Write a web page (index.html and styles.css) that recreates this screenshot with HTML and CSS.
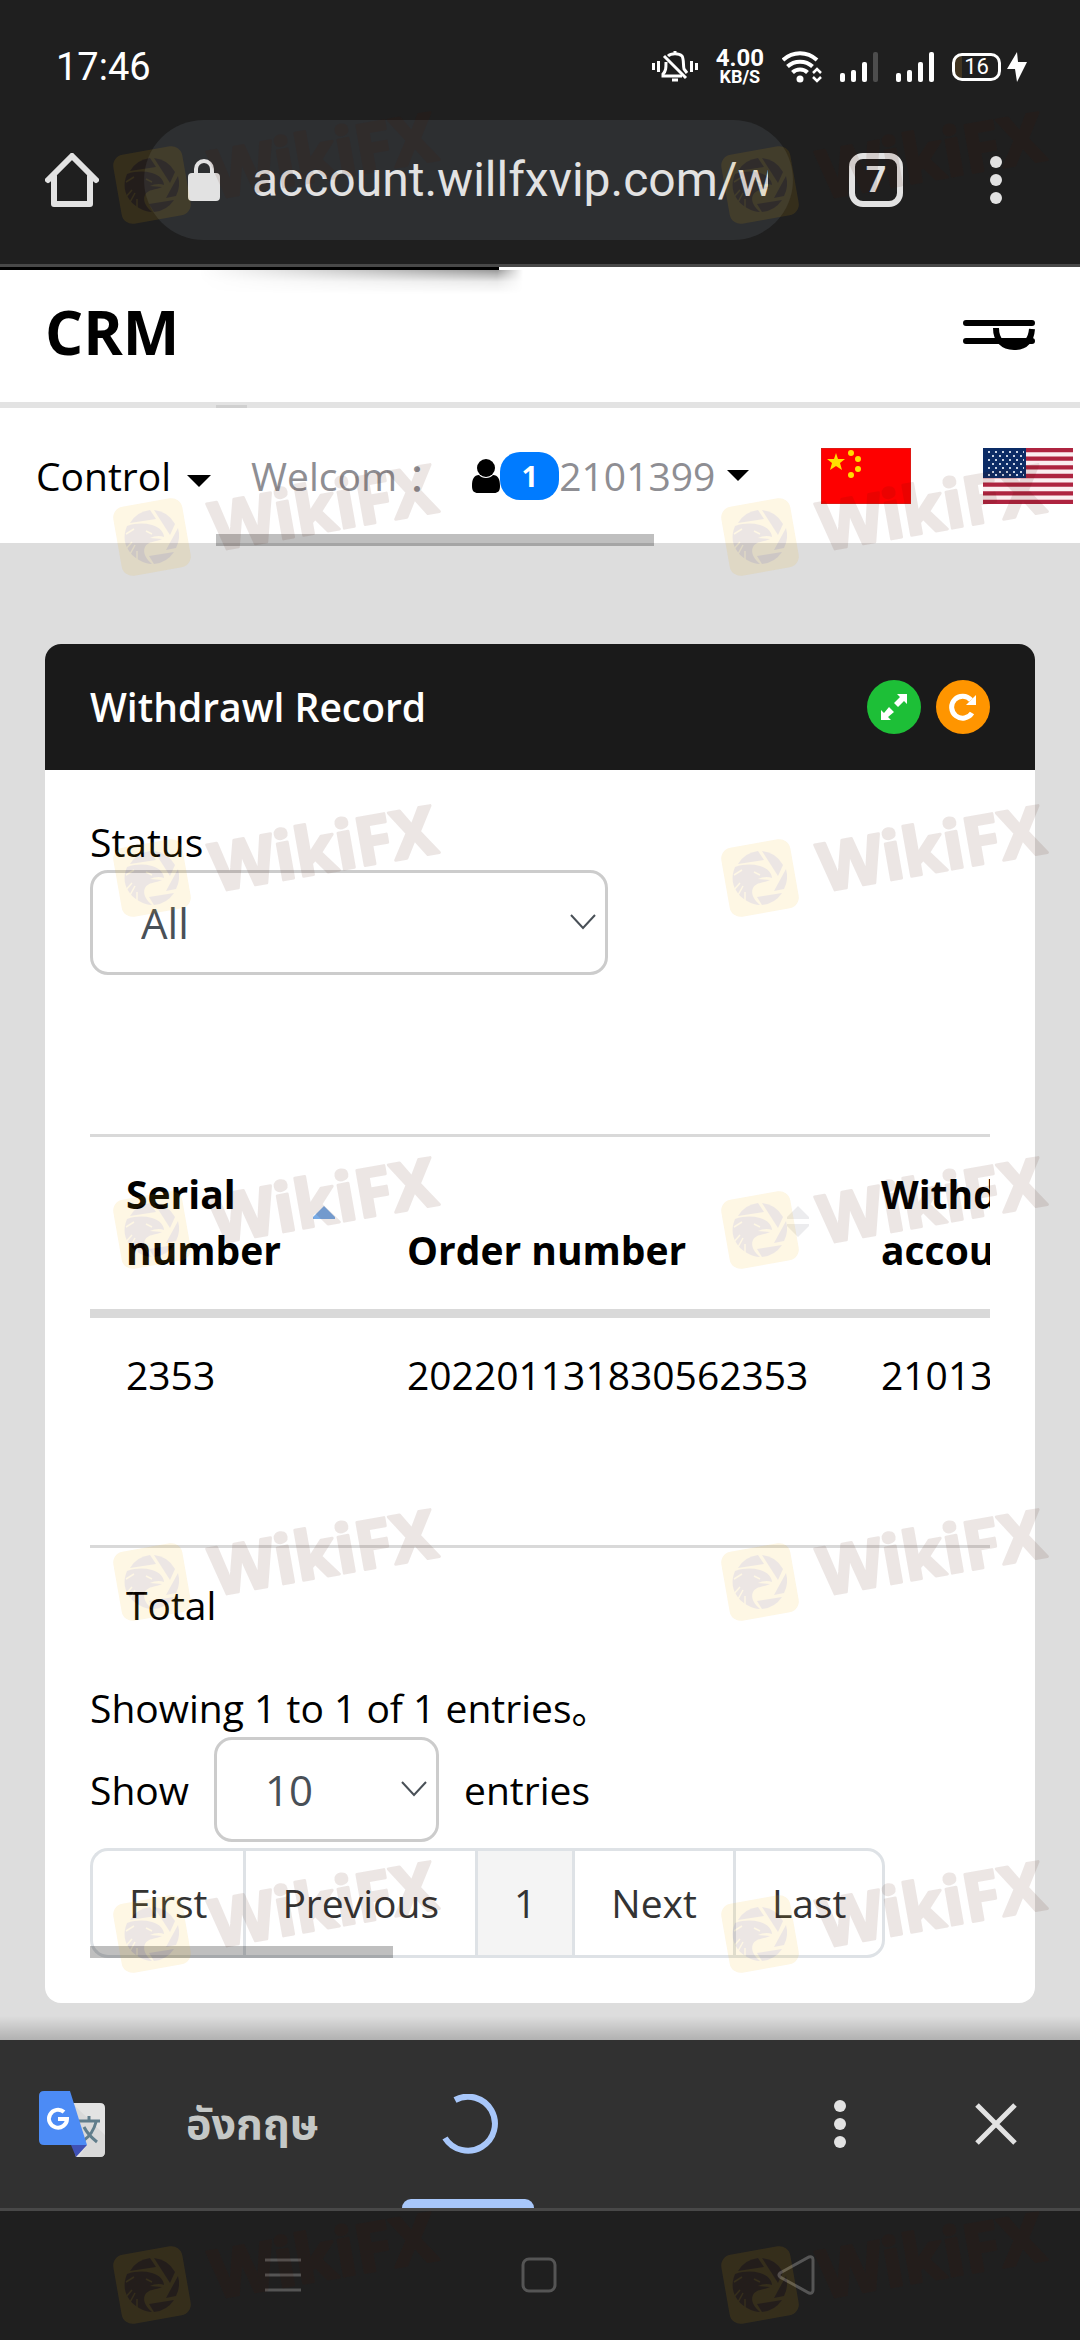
FILE: index.html
```html
<!DOCTYPE html>
<html lang="en">
<head>
<meta charset="utf-8">
<meta name="viewport" content="width=device-width, initial-scale=1">
<title>Withdrawl Record</title>
<link rel="stylesheet" href="styles.css">
</head>
<body>
<header class="browser">
  <div class="statusbar">
    <span class="clock">17:46</span>
    <div class="indicators">
      <svg width="46" height="32" viewBox="0 0 46 32" fill="none" stroke="#fff" stroke-width="3">
        <path d="M1.500 12v7M6.500 10v11M39.500 10v11M44.500 12v7M12 5l22 22" />
        <path d="M16 5c3-3 11-3 14 0 2 3 1 9 2 13l3 4M14 11c0 6 0 9-3 12v2h19M20 29h6M23 0v4" />
      </svg>
      <div class="netspeed"><span class="netspeed-value">4.00</span><span class="netspeed-unit">KB/S</span></div>
      <svg width="40" height="32" viewBox="0 0 40 32" fill="none" stroke="#fff" stroke-width="4">
        <path d="M1 9c10-9 24-9 34 0M5.500 15.500c7-6.500 18-6.500 25 0M10.500 21.500c4-4 11-4 15 0" />
        <circle cx="18" cy="28" r="3.500" fill="#fff" stroke="none" />
        <path d="M31 22l4-4 4 4M31 26l4 4 4-4" stroke-width="2.500" />
      </svg>
      <svg width="38" height="32" viewBox="0 0 38 32" fill="#fff">
        <rect y="22" width="5" height="9" rx="2" /><rect x="11" y="19" width="5" height="12" rx="2" /><rect x="22" y="11" width="5" height="20" rx="2" /><rect x="33" y="1" width="5" height="30" rx="2" fill="#4d4d4d" />
      </svg>
      <svg width="38" height="32" viewBox="0 0 38 32" fill="#fff">
        <rect y="22" width="5" height="9" rx="2" /><rect x="11" y="19" width="5" height="12" rx="2" /><rect x="22" y="11" width="5" height="20" rx="2" /><rect x="33" y="1" width="5" height="30" rx="2" />
      </svg>
      <div class="battery">
        <span class="battery-level">16</span>
        <svg width="20" height="32" viewBox="0 0 20 32" fill="#fff"><path d="M10 1L0 18h8l2 13L20 11h-9z" /></svg>
      </div>
    </div>
  </div>
  <div class="toolbar">
    <button class="icon-button" aria-label="Home">
      <svg width="54" height="54" viewBox="0 0 54 54" fill="none" stroke="#e2e2e2" stroke-width="6" stroke-linejoin="round" stroke-linecap="round"><path d="M3 27L27 3l24 24M9 23v28h36V23" /></svg>
    </button>
    <div class="address">
      <svg class="lock" width="32" height="42" viewBox="0 0 32 42"><rect y="14" width="32" height="28" rx="4" fill="#e2e2e2" /><path d="M8 15V10a8 8 0 0 1 16 0v5" fill="none" stroke="#e2e2e2" stroke-width="4" /></svg>
      <input class="address-input" type="text" aria-label="Address" value="account.willfxvip.com/w">
    </div>
    <button class="tabs" aria-label="Open tabs">7</button>
    <button class="icon-button menu" aria-label="Browser menu">
      <svg width="12" height="48" viewBox="0 0 12 48" fill="#e2e2e2"><circle cx="6" cy="6" r="6" /><circle cx="6" cy="24" r="6" /><circle cx="6" cy="42" r="6" /></svg>
    </button>
  </div>
  <div class="load-progress"></div>
</header>

<main class="page">
  <div class="brandbar">
    <a class="brand" href="#">CRM</a>
    <button class="icon-button toggle" aria-label="Toggle menu">
      <svg width="72" height="36" viewBox="0 0 72 36" fill="none" stroke="#000" stroke-width="6"><path d="M3 6h66M3 24h66" stroke-linecap="round" /><path d="M33 11c0 12 7 19 18 19s17-6 18-18" /><path d="M39 25h24l-5 5H45z" fill="#000" stroke="none" /></svg>
    </button>
    <span class="brandbar-scroll"></span>
  </div>
  <nav class="usernav">
    <a class="nav-link" href="#">Control
      <svg width="24" height="12" viewBox="0 0 24 12"><path d="M0 0h24L12 12z" /></svg>
    </a>
    <span class="welcome">Welcom ：</span>
    <a class="account" href="#">
      <svg width="28" height="34" viewBox="0 0 28 34"><circle cx="14" cy="9" r="9" /><path d="M7 16c3 4 11 4 14 0 5 0 7 4 7 11 0 5-2 7-6 7H6c-4 0-6-2-6-7 0-7 2-11 7-11z" /></svg>
      <span class="badge">1</span>
      <span class="account-id">2101399</span>
      <svg class="account-caret" width="22" height="11" viewBox="0 0 24 12"><path d="M0 0h24L12 12z" /></svg>
    </a>
    <a class="flag" href="#" aria-label="Chinese">
      <svg width="90" height="56" viewBox="0 0 90 56"><path fill="#fe0000" stroke="#c03028" d="M0 0h90v56H0z" /><g fill="#ffde00"><path d="M15 5l2 6h7l-5 4 2 7-6-4-6 4 2-7-5-4h7z" /><circle cx="30" cy="5" r="3" /><circle cx="37" cy="11" r="3" /><circle cx="37" cy="21" r="3" /><circle cx="30" cy="27" r="3" /></g></svg>
    </a>
    <a class="flag" href="#" aria-label="English">
      <svg width="90" height="56" viewBox="0 0 90 56"><path fill="#fbeef0" d="M0 0h90v56H0z" /><path stroke="#ae2440" stroke-width="4.300" d="M0 2h90M0 10.700h90M0 19.300h90M0 28h90M0 36.600h90M0 45.300h90M0 54h90" /><path fill="#0c2c66" d="M0 0h43v30H0z" /><path stroke="#c9d3e4" stroke-width="2" stroke-dasharray="2 5" d="M5 4h36M5 12h36M5 20h36M5 27h36M9 8h32M9 16h32M9 24h32" /></svg>
    </a>
    <span class="usernav-scroll"></span>
  </nav>

  <section class="card">
    <div class="card-header">
      <h1 class="card-title">Withdrawl Record</h1>
      <div class="card-tools">
        <button class="round green" aria-label="Expand"><svg width="28" height="28" viewBox="0 0 28 28" fill="#fff"><path d="M27 1v10l-3-3-6 6-4-4 6-6-3-3zM1 27V17l3 3 5-6 5 5-6 5 3 3z" /></svg></button>
        <button class="round orange" aria-label="Refresh"><svg width="28" height="28" viewBox="0 0 28 28"><path d="M23 20a11 11 0 1 1-1-13" fill="none" stroke="#fff" stroke-width="5" /><path d="M27 2v10H17z" fill="#fff" /></svg></button>
      </div>
    </div>
    <div class="card-body">
      <label class="status-label" for="status">Status</label>
      <div class="select-box status-box">
        <select class="select" id="status"><option>All</option></select>
        <svg class="chevron" width="26" height="16" viewBox="0 0 26 16"><path d="M1 1l12 13L25 1" /></svg>
      </div>

      <div class="table-wrap">
        <table class="records">
          <colgroup><col class="col-serial"><col class="col-order"><col class="col-account"></colgroup>
          <thead>
            <tr>
              <th>Serial number<svg class="sort" width="24" height="33" viewBox="0 0 24 33"><path d="M1 12L12 1l11 11v2H1z" fill="#78abe6" /></svg></th>
              <th>Order number<svg class="sort" width="24" height="33" viewBox="0 0 24 33" fill="#ececee"><path d="M1 12L12 1l11 11v2H1zM1 19h22v2L12 32 1 21z" /></svg></th>
              <th>Withdrawal account</th>
            </tr>
          </thead>
          <tbody>
            <tr><td>2353</td><td>202201131830562353</td><td>2101399</td></tr>
          </tbody>
          <tfoot>
            <tr><td>Total</td><td></td><td></td></tr>
          </tfoot>
        </table>
      </div>

      <p class="summary">Showing 1 to 1 of 1 entries。</p>
      <div class="page-size">
        <label for="size">Show</label>
        <div class="select-box size-box">
          <select class="select" id="size"><option>10</option></select>
          <svg class="chevron" width="26" height="16" viewBox="0 0 26 16"><path d="M1 1l12 13L25 1" /></svg>
        </div>
        <span>entries</span>
      </div>
      <div class="pager">
        <a class="pager-link" href="#">First</a>
        <a class="pager-link" href="#">Previous</a>
        <a class="pager-link current" href="#">1</a>
        <a class="pager-link" href="#">Next</a>
        <a class="pager-link" href="#">Last</a>
        <span class="pager-scroll"></span>
      </div>
    </div>
  </section>
</main>

<footer class="bottom">
  <div class="translate">
    <svg width="66" height="66" viewBox="0 0 66 66">
      <path d="M24 12h37q5 0 5 5v44q0 5-5 5H37z" fill="#e3e3e3" />
      <path d="M35 14l31 30v17q0 5-5 5H40l8-12z" fill="#d2d2d2" opacity=".6" />
      <g fill="none" stroke="#607d8b" stroke-width="3"><path d="M40 30h21M50 25v5M57 31c-2 8-7 15-13 19M45 36c3 6 8 11 13 15" /></g>
      <path d="M32 54h16L37 66z" fill="#3f51b5" />
      <path d="M5 0h26l17 54H5q-5 0-5-5V5q0-5 5-5z" fill="#4c8bf5" />
      <path d="M25 21a9 9 0 1 0 3 7h-9" fill="none" stroke="#fff" stroke-width="4" />
    </svg>
    <button class="lang" lang="th">อังกฤษ</button>
    <button class="lang-active" aria-label="Translating">
      <svg width="60" height="60" viewBox="0 0 60 60" fill="none" stroke="#a8c7fa" stroke-width="6"><path d="M17 6A27 27 0 1 1 7 44" /></svg>
    </button>
    <button class="icon-button more" aria-label="Translate options">
      <svg width="12" height="48" viewBox="0 0 12 48" fill="#e2e2e2"><circle cx="6" cy="6" r="6" /><circle cx="6" cy="24" r="6" /><circle cx="6" cy="42" r="6" /></svg>
    </button>
    <button class="icon-button" aria-label="Close">
      <svg width="42" height="42" viewBox="0 0 42 42" stroke="#e2e2e2" stroke-width="5"><path d="M2 2l38 38M40 2L2 40" /></svg>
    </button>
  </div>
  <div class="system-nav">
    <button class="icon-button" aria-label="Recent"><svg width="36" height="36" viewBox="0 0 36 36" stroke="#555" stroke-width="3"><path d="M0 3h36M0 18h36M0 33h36" /></svg></button>
    <button class="icon-button" aria-label="Home screen"><svg width="36" height="36" viewBox="0 0 36 36" fill="none" stroke="#555" stroke-width="3"><rect x="2" y="2" width="32" height="32" rx="6" /></svg></button>
    <button class="icon-button" aria-label="Back"><svg width="38" height="40" viewBox="0 0 38 40" fill="none" stroke="#555" stroke-width="3"><path d="M3 18L32 2q4-1 4 3v30q0 4-4 3L3 22q-2-2 0-4z" /></svg></button>
  </div>
</footer>

<svg class="watermark" width="1080" height="2340" viewBox="0 0 1080 2340" aria-hidden="true">
  <defs>
    <g id="mark">
      <rect x="-35" y="-35" width="70" height="70" rx="11" fill="#f0af00" transform="rotate(-10)" />
      <g fill="#501905">
        <path d="M-22-14A27 27 0 0 1-2-27L4-18z" />
        <path d="M2-27A27 27 0 0 1 23-13L18-2z" />
        <path d="M26-9A27 27 0 0 1 24 11L14 13z" />
        <path d="M22 15A27 27 0 0 1 2 27L-3 19z" />
        <path d="M-25-11C-16-14-8-14 0-12 8-10 12-4 12 0 8-2 2-1-2 1L10 2C4 5-4 4-7 10-10 16-5 23 0 27-16 26-34 10-25-11z" />
      </g>
      <path d="M-27 13l7-8M-23 19l6-11M-15 24v-10M-6-6l6 3M-26-3l8-5" fill="none" stroke="#f0af00" stroke-width="1.500" />
      <text x="63" y="14" font-size="67" fill="#501905" stroke="#501905" stroke-width="3" stroke-linejoin="round" class="mark-text" transform="rotate(-10 63 14)">WikiFX</text>
    </g>
  </defs>
  <g opacity=".107">
    <use href="#mark" x="152" y="185" /><use href="#mark" x="760" y="185" />
    <use href="#mark" x="152" y="537" /><use href="#mark" x="760" y="537" />
    <use href="#mark" x="152" y="878" /><use href="#mark" x="760" y="878" />
    <use href="#mark" x="152" y="1230" /><use href="#mark" x="760" y="1230" />
    <use href="#mark" x="152" y="1582" /><use href="#mark" x="760" y="1582" />
    <use href="#mark" x="152" y="1934" /><use href="#mark" x="760" y="1934" />
    <use href="#mark" x="152" y="2285" /><use href="#mark" x="760" y="2285" />
  </g>
</svg>
</body>
</html>
```

FILE: styles.css
```css
* { box-sizing: border-box; }

body {
  margin: 0;
  position: relative;
  min-height: 100vh;
  display: flex;
  flex-direction: column;
  overflow-x: hidden;
  background: #ddd;
  color: #000;
  font: 39px/56px "Open Sans", "Noto Sans CJK SC", sans-serif;
}

svg { display: block; flex: none; }
a { color: inherit; text-decoration: none; }
button { font: inherit; color: inherit; background: none; border: 0; padding: 0; }

.icon-button { display: grid; place-items: center; }

/* Browser chrome */
.browser {
  position: relative;
  background: #1f1f1f;
  border-bottom: 3px solid #484848;
  font-family: Roboto, sans-serif;
}

.statusbar {
  display: flex;
  justify-content: space-between;
  align-items: center;
  height: 120px;
  padding: 14px 53px 0 56px;
  color: #fff;
}

.clock { font-size: 38px; line-height: 44px; }
.indicators { display: flex; align-items: center; gap: 18px; }

.netspeed { display: flex; flex-direction: column; align-items: center; font-weight: 700; }
.netspeed-value { font-size: 24px; line-height: 20px; }
.netspeed-unit { font-size: 18px; line-height: 18px; }

.battery { display: flex; align-items: center; gap: 6px; }
.battery-level {
  width: 49px;
  height: 28px;
  border: 3px solid #fff;
  border-radius: 10px;
  background: linear-gradient(to right, #41341f 7px, transparent 7px);
  font-size: 22px;
  line-height: 22px;
  text-align: center;
}

.toolbar {
  display: flex;
  align-items: center;
  padding: 0 78px 24px 45px;
}

.address {
  flex: 1;
  min-width: 0;
  display: flex;
  align-items: center;
  gap: 32px;
  height: 120px;
  margin: 0 56px 0 45px;
  padding: 0 25px 0 44px;
  border-radius: 60px;
  background: #2d2f31;
}

.address-input {
  flex: 1;
  min-width: 0;
  padding: 0;
  border: 0;
  background: none;
  color: #e2e2e2;
  font: 48px/60px Roboto, sans-serif;
}

.tabs {
  width: 54px;
  height: 54px;
  border: 6px solid #e2e2e2;
  border-radius: 14px;
  color: #e2e2e2;
  font: 700 36px/42px Roboto, sans-serif;
}

.menu { margin-left: 87px; }

.load-progress {
  position: absolute;
  top: 100%;
  left: 0;
  z-index: 1;
  width: 499px;
  height: 3px;
  margin-top: 3px;
  background: #000;
}

.load-progress::after {
  content: "";
  position: absolute;
  right: -24px;
  top: 3px;
  width: 324px;
  height: 24px;
  background: linear-gradient(rgba(0, 0, 0, .4), rgba(0, 0, 0, .08) 50%, transparent);
  -webkit-mask-image: linear-gradient(to right, transparent, #000 92%, transparent);
  mask-image: linear-gradient(to right, transparent, #000 92%, transparent);
}

/* Site header */
.page { flex: 1; }

.brandbar {
  position: relative;
  display: flex;
  align-items: center;
  justify-content: space-between;
  height: 141px;
  padding: 0 45px 6px;
  border-bottom: 6px solid #e3e3e3;
  background: #fff;
}

.brand { font-size: 60px; line-height: 80px; font-weight: 700; }
.toggle { padding-top: 6px; }

.brandbar-scroll {
  position: absolute;
  left: 20%;
  bottom: -6px;
  width: 31px;
  height: 3px;
  background: #d0d0d0;
}

.usernav {
  position: relative;
  display: flex;
  align-items: center;
  height: 135px;
  padding-left: 36px;
  background: #fff;
  white-space: nowrap;
}

.nav-link { display: flex; align-items: center; gap: 16px; margin-right: 40px; }
.nav-link svg { margin-top: 10px; }
.welcome { color: #8e8e93; margin-right: 26px; }
.account { display: flex; align-items: center; color: #8e8e93; }
.account > svg { fill: #000; }

.badge {
  width: 59px;
  height: 48px;
  border-radius: 20px;
  background: #007bff;
  color: #fff;
  font-size: 29px;
  line-height: 48px;
  font-weight: 700;
  text-align: center;
}

.account-caret { margin-left: 12px; }
.flag { margin-left: 72px; }

.usernav-scroll {
  position: absolute;
  left: 20%;
  bottom: -3px;
  width: 438px;
  height: 12px;
  background: rgba(0, 0, 0, .25);
}

/* Record card */
.card {
  margin: 101px 45px 37px;
  border-radius: 16px;
  background: #fff;
  overflow: hidden;
}

.card-header {
  display: flex;
  align-items: center;
  justify-content: space-between;
  padding: 35px 45px;
  background: #1a1a1a;
  color: #fff;
}

.card-title { margin: 0; font-size: 39px; line-height: 56px; font-weight: 600; }
.card-tools { display: flex; gap: 15px; }
.round { display: grid; place-items: center; width: 54px; height: 54px; border-radius: 50%; }
.green { background: #1dbf37; }
.orange { background: #ff9500; }

.card-body { padding: 44px 45px 45px; }
.status-label { display: block; }

.select-box { position: relative; }
.status-box { width: 518px; max-width: 100%; margin-bottom: 159px; }
.size-box { width: 225px; }

.select {
  display: block;
  appearance: none;
  width: 100%;
  height: 105px;
  padding: 0 48px;
  border: 3px solid #ccc;
  border-radius: 18px;
  background: #fff;
  color: #495057;
  font: 42px/60px "Open Sans", sans-serif;
}

.chevron {
  position: absolute;
  right: 12px;
  top: 44px;
  fill: none;
  stroke: #495057;
  stroke-width: 2;
}

.table-wrap { overflow: hidden; margin-bottom: 17px; }
.records { table-layout: fixed; width: 1060px; border-collapse: separate; border-spacing: 0; }
.col-serial { width: 281px; }
.col-order { width: 474px; }

.records th, .records td {
  padding: 29px 36px 30px;
  border-top: 3px solid #d9d9d9;
  text-align: left;
}

.records th {
  position: relative;
  padding-bottom: 31px;
  border-bottom: 9px solid #d9d9d9;
  vertical-align: bottom;
  font-weight: 700;
}

.records tbody td { height: 227px; border-top: 0; vertical-align: top; }
.sort { position: absolute; right: 35px; top: 68px; }

.summary { margin: 0 0 1px; }
.page-size { display: flex; align-items: center; gap: 25px; margin-bottom: 6px; }

.pager { position: relative; display: flex; color: #333; }
.pager-link {
  padding: 24px 36px;
  border: 3px solid #dee2e6;
  border-right-width: 0;
}
.pager-link:first-child { border-radius: 18px 0 0 18px; }
.pager-link:nth-child(5) { border-right-width: 3px; border-radius: 0 18px 18px 0; }
.current { background: #f4f4f4; }

.pager-scroll {
  position: absolute;
  left: 0;
  bottom: 0;
  width: 303px;
  height: 12px;
  background: rgba(0, 0, 0, .25);
}

/* Translate bar and system navigation */
.bottom { position: relative; background: #1f1f1f; }
.bottom::before {
  content: "";
  position: absolute;
  left: 0;
  right: 0;
  bottom: 100%;
  height: 24px;
  background: linear-gradient(transparent, rgba(0, 0, 0, .2));
}

.translate {
  display: flex;
  align-items: center;
  height: 171px;
  padding: 0 63px 0 39px;
  border-bottom: 3px solid #484848;
  background: #313131;
}

.lang {
  width: 132px;
  margin-left: 81px;
  color: #c4c7c5;
  font: 700 43px/60px Roboto, "Noto Sans Thai", "Noto Sans", sans-serif;
  white-space: nowrap;
}

.lang-active {
  position: relative;
  align-self: stretch;
  display: grid;
  place-items: center;
  width: 132px;
  margin-left: 84px;
}

.lang-active::after {
  content: "";
  position: absolute;
  left: 0;
  right: 0;
  bottom: 0;
  height: 9px;
  border-radius: 9px 9px 0 0;
  background: #a8c7fa;
}

.more { margin-left: auto; margin-right: 129px; }

.system-nav {
  display: flex;
  align-items: center;
  justify-content: space-between;
  height: 129px;
  padding: 0 265px 2px;
}

.watermark { position: absolute; top: 0; left: 0; pointer-events: none; }
.mark-text { font-family: "Noto Sans", sans-serif; font-weight: 700; }
```
